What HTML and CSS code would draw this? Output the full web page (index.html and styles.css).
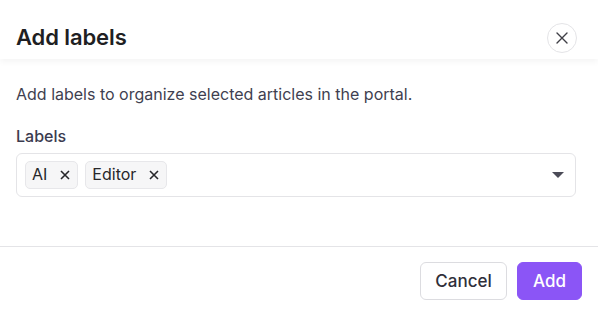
FILE: index.html
```html
<!DOCTYPE html>
<html>
<head>
<meta charset="utf-8">
<link rel="stylesheet" href="styles.css">
</head>
<body>
<div class="modal">
  <div class="header">
    <h2 class="title">Add labels</h2>
    <button class="close" aria-label="Close">
      <svg width="14" height="14" viewBox="0 0 14 14"><path d="M2 2L12 12M12 2L2 12" stroke="#3f3f46" stroke-width="1.4" stroke-linecap="round"/></svg>
    </button>
  </div>
  <div class="body">
    <p class="desc">Add labels to organize selected articles in the portal.</p>
    <div class="label">Labels</div>
    <div class="select">
      <div class="chips">
        <span class="chip">AI<span class="x"><svg width="10" height="10" viewBox="0 0 10 10"><path d="M1 1L9 9M9 1L1 9" stroke="#27272a" stroke-width="1.6"/></svg></span></span>
        <span class="chip">Editor<span class="x"><svg width="10" height="10" viewBox="0 0 10 10"><path d="M1 1L9 9M9 1L1 9" stroke="#27272a" stroke-width="1.6"/></svg></span></span>
      </div>
      <svg class="caret" width="12" height="6" viewBox="0 0 12 6"><path d="M0 0H12L6 6Z" fill="#4b4b57"/></svg>
    </div>
  </div>
  <div class="footer">
    <button class="btn cancel">Cancel</button>
    <button class="btn add">Add</button>
  </div>
</div>
</body>
</html>
```

FILE: styles.css
```css
* { box-sizing: border-box; }
html, body { margin: 0; padding: 0; background: #fff; }
body { font-family: Inter, "Noto Sans", sans-serif; color: #27272a; }
.modal { width: 598px; height: 312px; display: flex; flex-direction: column; }
.header {
  height: 59px;
  display: flex; align-items: flex-start; justify-content: space-between;
  padding: 23px 21px 0 16px;
  box-shadow: 0 3px 6px rgba(0,0,0,0.045);
  position: relative;
}
.title { margin: 3px 0 0; font-size: 22px; line-height: 22px; font-weight: 600; color: #1f1f23; letter-spacing: -0.1px; }
.close {
  width: 30px; height: 30px; border-radius: 50%;
  border: 1px solid #e4e4e7; background: #fff;
  display: flex; align-items: center; justify-content: center;
  padding: 0;
}
.body { padding: 24px 22px 0 16px; flex: 1; }
.desc { margin: 0; font-size: 16px; color: #3f3f50; line-height: 22px; }
.label { margin-top: 20px; font-size: 16px; font-weight: 500; color: #3b3b4f; line-height: 22px; }
.select {
  margin-top: 6px; height: 44px;
  border: 1px solid #e4e4e7; border-radius: 6px;
  display: flex; align-items: center; justify-content: space-between;
  padding: 0 11px 0 8px;
}
.chips { display: flex; gap: 7px; }
.chip {
  display: inline-flex; align-items: center;
  height: 28px; padding: 0 7px 2px 6px;
  background: #f6f6f7; border: 1px solid #e7e7ea; border-radius: 5px;
  font-size: 16px; color: #27272a;
}
.chip .x { display: inline-flex; margin-left: 13px; margin-top: 2px; }
.footer {
  border-top: 1px solid #e4e4e7;
  height: 66px;
  display: flex; justify-content: flex-end; align-items: flex-start;
  gap: 10px; padding: 15px 16px 0 0;
}
.btn {
  height: 38px; border-radius: 6px; font-family: inherit; font-size: 17px;
  font-weight: 500; padding: 0;
}
.cancel { background: #fff; border: 1px solid #dcdce0; color: #2f2f3a; width: 87px; }
.add { background: #8b55f6; border: 1px solid #8b55f6; color: #fff; width: 65px; }
```
